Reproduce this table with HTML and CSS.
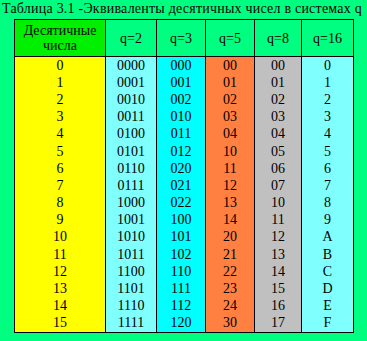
FILE: index.html
```html
<!DOCTYPE html>
<html lang="ru">
<head>
<meta charset="utf-8">
<link rel="stylesheet" href="styles.css">
</head>
<body>
<div class="title">Таблица 3.1 -Эквиваленты десятичных чисел в системах q</div>
<table class="tbl">
<colgroup>
<col class="c1"><col class="c2"><col class="c3"><col class="c4"><col class="c5"><col class="c6">
</colgroup>
<thead>
<tr><th class="hfirst">Десятичные<br>числа</th><th>q=2</th><th>q=3</th><th>q=5</th><th>q=8</th><th>q=16</th></tr>
</thead>
<tbody>
<tr><td>0</td><td>0000</td><td>000</td><td>00</td><td>00</td><td>0</td></tr>
<tr><td>1</td><td>0001</td><td>001</td><td>01</td><td>01</td><td>1</td></tr>
<tr><td>2</td><td>0010</td><td>002</td><td>02</td><td>02</td><td>2</td></tr>
<tr><td>3</td><td>0011</td><td>010</td><td>03</td><td>03</td><td>3</td></tr>
<tr><td>4</td><td>0100</td><td>011</td><td>04</td><td>04</td><td>4</td></tr>
<tr><td>5</td><td>0101</td><td>012</td><td>10</td><td>05</td><td>5</td></tr>
<tr><td>6</td><td>0110</td><td>020</td><td>11</td><td>06</td><td>6</td></tr>
<tr><td>7</td><td>0111</td><td>021</td><td>12</td><td>07</td><td>7</td></tr>
<tr><td>8</td><td>1000</td><td>022</td><td>13</td><td>10</td><td>8</td></tr>
<tr><td>9</td><td>1001</td><td>100</td><td>14</td><td>11</td><td>9</td></tr>
<tr><td>10</td><td>1010</td><td>101</td><td>20</td><td>12</td><td>A</td></tr>
<tr><td>11</td><td>1011</td><td>102</td><td>21</td><td>13</td><td>B</td></tr>
<tr><td>12</td><td>1100</td><td>110</td><td>22</td><td>14</td><td>C</td></tr>
<tr><td>13</td><td>1101</td><td>111</td><td>23</td><td>15</td><td>D</td></tr>
<tr><td>14</td><td>1110</td><td>112</td><td>24</td><td>16</td><td>E</td></tr>
<tr><td>15</td><td>1111</td><td>120</td><td>30</td><td>17</td><td>F</td></tr>
</tbody>
</table>
</body>
</html>
```
FILE: styles.css
```css
html, body {
  margin: 0;
  padding: 0;
  background: #00ff80;
}
body {
  width: 367px;
  height: 341px;
  overflow: hidden;
  font-family: "Liberation Serif", "Times New Roman", serif;
  font-size: 14px;
  color: #000;
}
.title {
  height: 19px;
  line-height: 17px;
  padding-left: 2px;
  letter-spacing: 0.22px;
  white-space: nowrap;
}
.tbl {
  margin-left: 14px;
  border-collapse: collapse;
  table-layout: fixed;
  width: 339px;
  border: 1px solid #000;
}
.c1 { width: 91px; }
.c2 { width: 51px; }
.c3 { width: 49px; }
.c4 { width: 49px; }
.c5 { width: 47px; }
.c6 { width: 52px; }
.tbl th {
  font-weight: normal;
  height: 36px;
  padding: 0;
  border: 1px solid #000;
  background: #00ff80;
  line-height: 15px;
  text-align: center;
  vertical-align: middle;
}
.tbl th.hfirst {
  background: #00f000;
}
.tbl td {
  padding: 0;
  height: 17.2px;
  line-height: 16px;
  text-align: center;
  vertical-align: middle;
  border-left: 1px solid #000;
  border-right: 1px solid #000;
}
.tbl td:nth-child(1) { background: #ffff00; }
.tbl td:nth-child(2) { background: #80ffff; }
.tbl td:nth-child(3) { background: #00ffff; }
.tbl td:nth-child(4) { background: #ff8040; }
.tbl td:nth-child(5) { background: #c0c0c0; }
.tbl td:nth-child(6) { background: #80ffff; }
```
